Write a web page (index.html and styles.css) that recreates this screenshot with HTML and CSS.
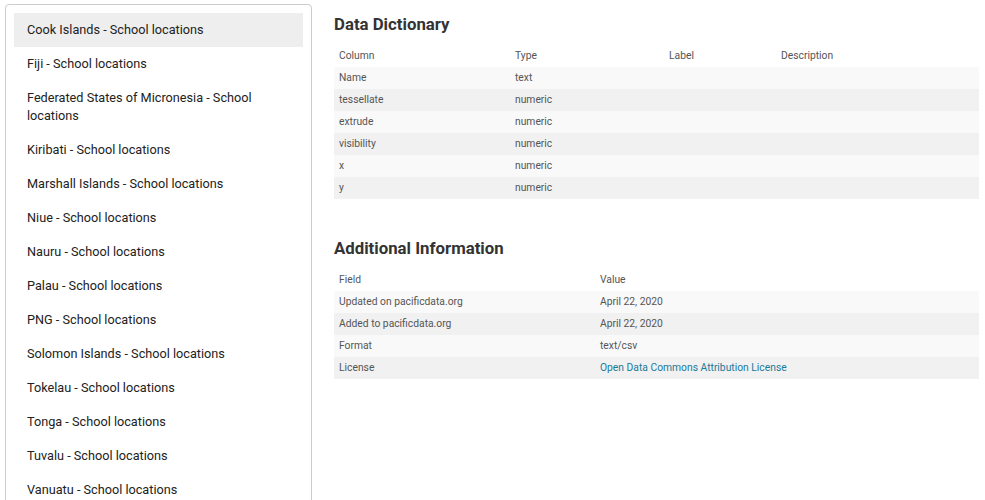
FILE: index.html
```html
<!DOCTYPE html>
<html>
<head>
<meta charset="utf-8">
<link rel="stylesheet" href="styles.css">
</head>
<body>
<div class="page">
  <nav class="sidebar">
    <ul class="list">
      <li class="item active">Cook Islands - School locations</li>
      <li class="item">Fiji - School locations</li>
      <li class="item">Federated States of Micronesia - School locations</li>
      <li class="item">Kiribati - School locations</li>
      <li class="item">Marshall Islands - School locations</li>
      <li class="item">Niue - School locations</li>
      <li class="item">Nauru - School locations</li>
      <li class="item">Palau - School locations</li>
      <li class="item">PNG - School locations</li>
      <li class="item">Solomon Islands - School locations</li>
      <li class="item">Tokelau - School locations</li>
      <li class="item">Tonga - School locations</li>
      <li class="item">Tuvalu - School locations</li>
      <li class="item">Vanuatu - School locations</li>
    </ul>
  </nav>
  <main class="content">
    <section class="section">
      <h2 class="title">Data Dictionary</h2>
      <table class="tbl dict">
        <thead>
          <tr><th class="c1">Column</th><th class="c2">Type</th><th class="c3">Label</th><th>Description</th></tr>
        </thead>
        <tbody>
          <tr><td>Name</td><td>text</td><td></td><td></td></tr>
          <tr><td>tessellate</td><td>numeric</td><td></td><td></td></tr>
          <tr><td>extrude</td><td>numeric</td><td></td><td></td></tr>
          <tr><td>visibility</td><td>numeric</td><td></td><td></td></tr>
          <tr><td>x</td><td>numeric</td><td></td><td></td></tr>
          <tr><td>y</td><td>numeric</td><td></td><td></td></tr>
        </tbody>
      </table>
    </section>
    <section class="section second">
      <h2 class="title">Additional Information</h2>
      <table class="tbl info">
        <thead>
          <tr><th class="f1">Field</th><th>Value</th></tr>
        </thead>
        <tbody>
          <tr><td>Updated on pacificdata.org</td><td>April 22, 2020</td></tr>
          <tr><td>Added to pacificdata.org</td><td>April 22, 2020</td></tr>
          <tr><td>Format</td><td>text/csv</td></tr>
          <tr><td>License</td><td><a class="link" href="#">Open Data Commons Attribution License</a></td></tr>
        </tbody>
      </table>
    </section>
  </main>
</div>
</body>
</html>
```
FILE: styles.css
```css
html, body {
  margin: 0;
  padding: 0;
  background: #fff;
}
body {
  font-family: Roboto, "Noto Sans", sans-serif;
  color: #333;
  overflow: hidden;
  height: 500px;
}
.page {
  display: flex;
  padding: 4px 6px 0 5px;
  gap: 22px;
  align-items: flex-start;
}
.sidebar {
  width: 307px;
  flex: none;
  border: 1px solid #ccc;
  border-radius: 4px;
  padding: 8px 8px 0 8px;
  height: 520px;
  box-sizing: border-box;
}
.list {
  list-style: none;
  margin: 0;
  padding: 0;
}
.item {
  padding: 8px 12px 8px 13px;
  font-size: 12.7px;
  line-height: 18px;
  color: #222;
}
.item.active {
  background: #eeeeee;
}
.content {
  flex: 1;
  min-width: 0;
}
.section {
  margin: 0;
}
.second {
  margin-top: 38px;
}
.title {
  margin: 9px 0 0 0;
  font-size: 16.8px;
  line-height: 22px;
  font-weight: 700;
  color: #333;
}
.tbl {
  width: 100%;
  border-collapse: collapse;
  margin-top: 10px;
  font-size: 10.3px;
  color: #555;
}
.tbl th, .tbl td {
  text-align: left;
  font-weight: 400;
  padding: 0 5px;
  height: 22px;
  line-height: 22px;
  vertical-align: middle;
}
.tbl tbody tr:nth-child(odd) {
  background: #f9f9f9;
}
.tbl tbody tr:nth-child(even) {
  background: #f1f1f1;
}
.c1 { width: 166px; }
.c2 { width: 144px; }
.c3 { width: 102px; }
.f1 { width: 251px; }
.link {
  color: #1a7a9a;
  text-decoration: none;
}
```
